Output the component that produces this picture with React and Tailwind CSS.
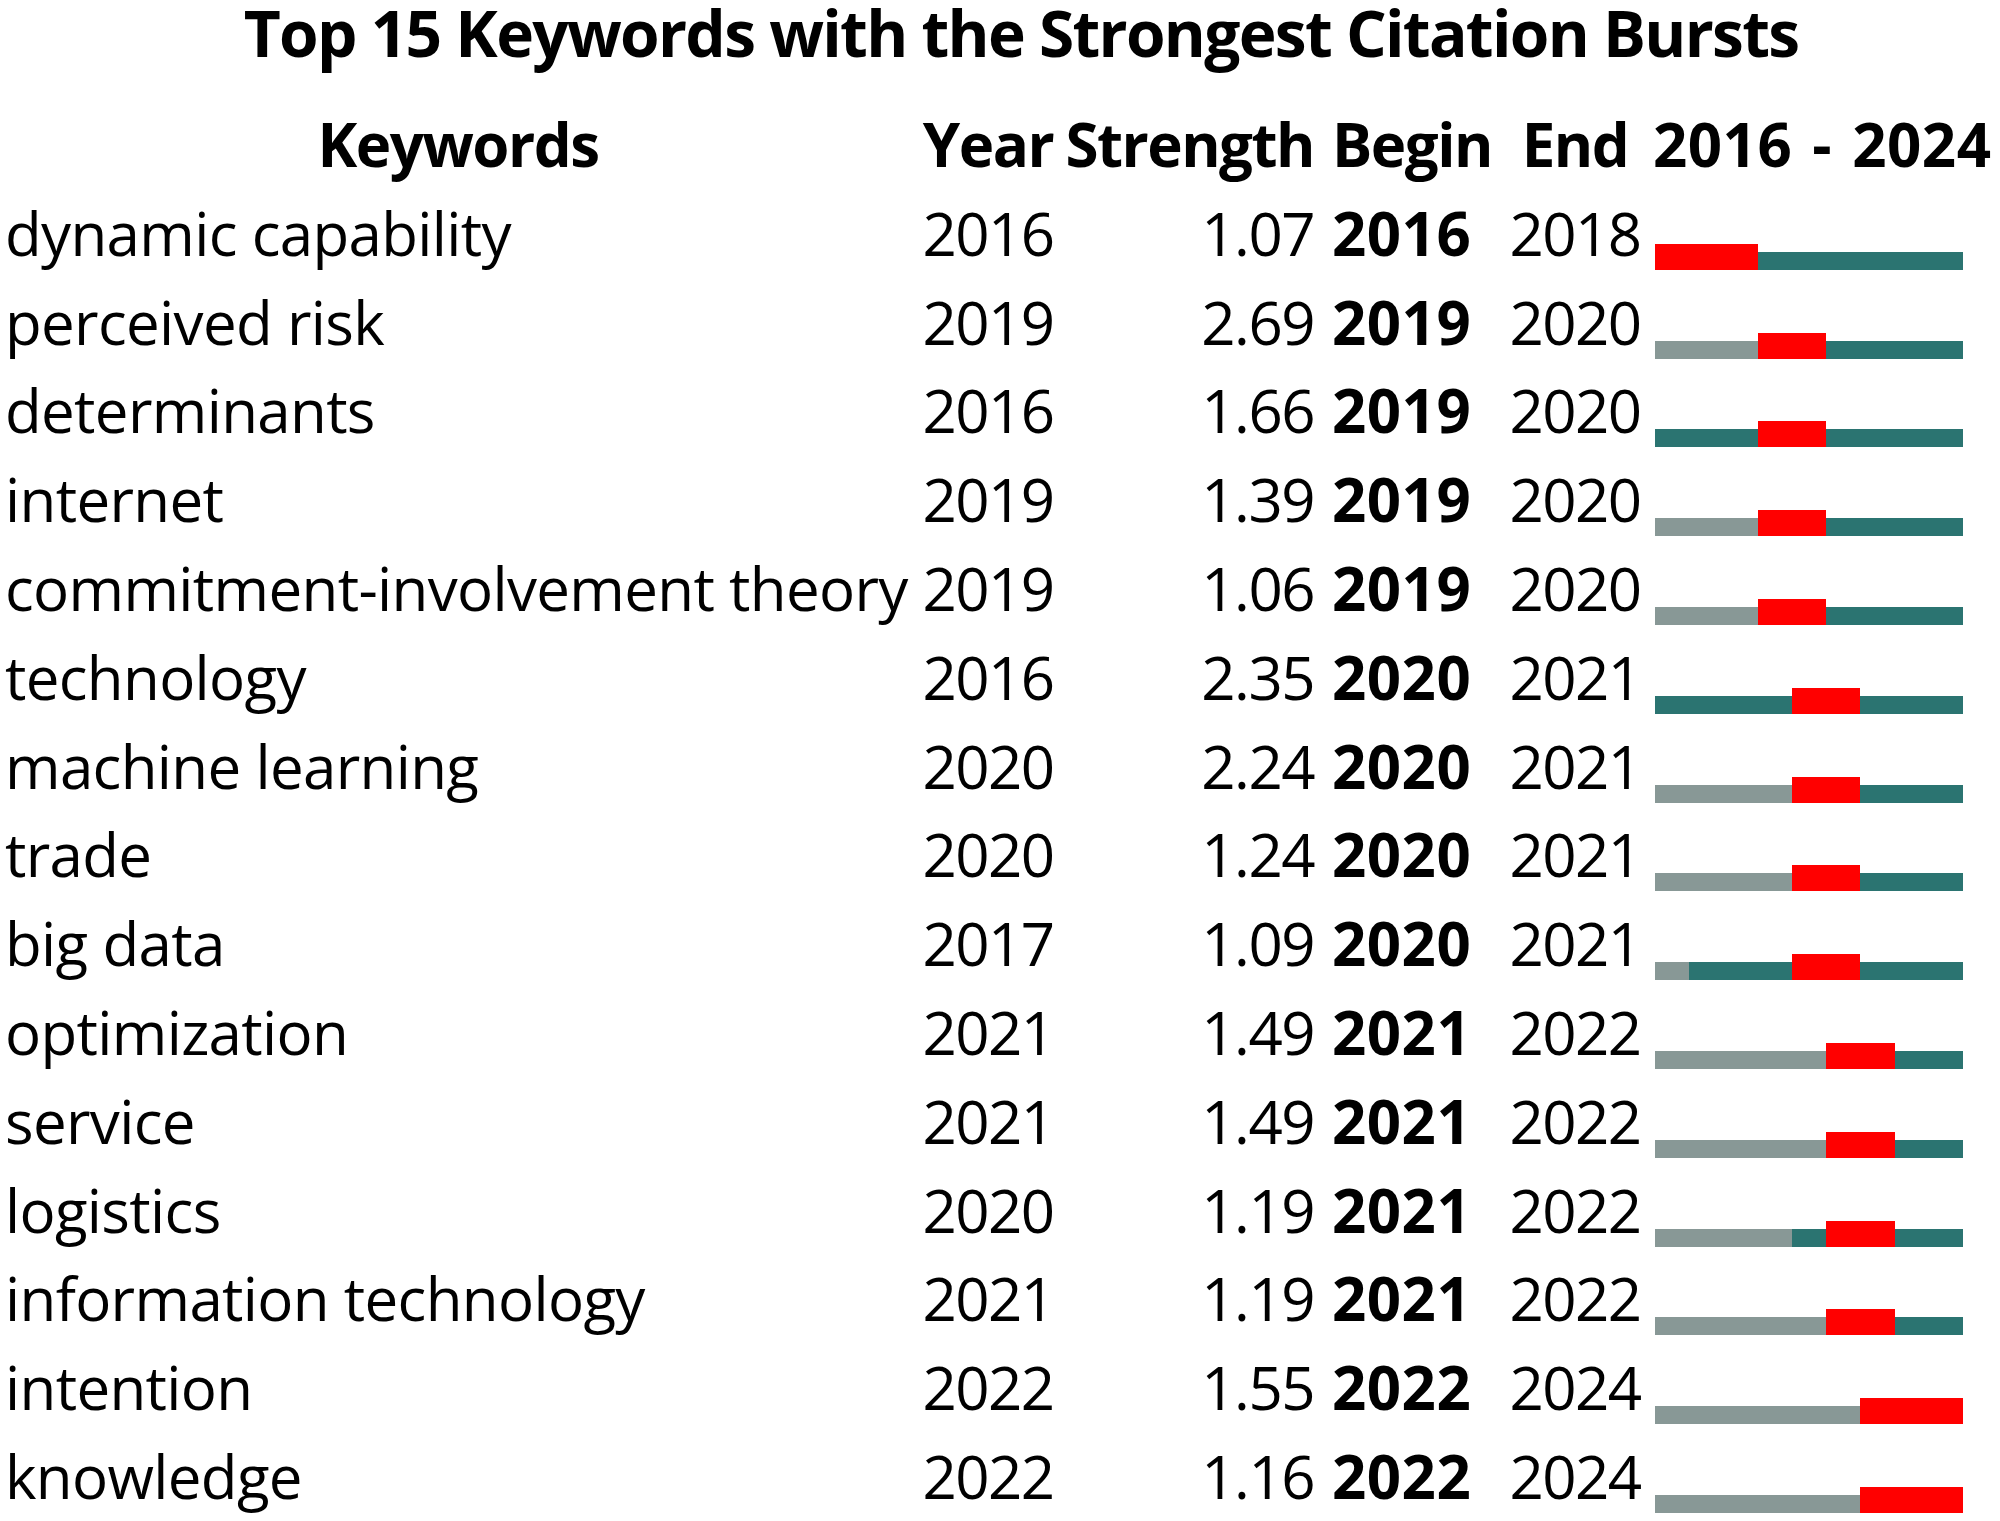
import React from 'react';

const YEARS = [2016, 2017, 2018, 2019, 2020, 2021, 2022, 2023, 2024];

const rows = [
  { keyword: 'dynamic capability', year: 2016, strength: '1.07', begin: 2016, end: 2018 },
  { keyword: 'perceived risk', year: 2019, strength: '2.69', begin: 2019, end: 2020 },
  { keyword: 'determinants', year: 2016, strength: '1.66', begin: 2019, end: 2020 },
  { keyword: 'internet', year: 2019, strength: '1.39', begin: 2019, end: 2020 },
  { keyword: 'commitment-involvement theory', year: 2019, strength: '1.06', begin: 2019, end: 2020 },
  { keyword: 'technology', year: 2016, strength: '2.35', begin: 2020, end: 2021 },
  { keyword: 'machine learning', year: 2020, strength: '2.24', begin: 2020, end: 2021 },
  { keyword: 'trade', year: 2020, strength: '1.24', begin: 2020, end: 2021 },
  { keyword: 'big data', year: 2017, strength: '1.09', begin: 2020, end: 2021 },
  { keyword: 'optimization', year: 2021, strength: '1.49', begin: 2021, end: 2022 },
  { keyword: 'service', year: 2021, strength: '1.49', begin: 2021, end: 2022 },
  { keyword: 'logistics', year: 2020, strength: '1.19', begin: 2021, end: 2022 },
  { keyword: 'information technology', year: 2021, strength: '1.19', begin: 2021, end: 2022 },
  { keyword: 'intention', year: 2022, strength: '1.55', begin: 2022, end: 2024 },
  { keyword: 'knowledge', year: 2022, strength: '1.16', begin: 2022, end: 2024 },
];

// colour of one year cell in the burst strip
const cellClass = (row, y) => {
  if (y >= row.begin && y <= row.end) return 'h-[26px] bg-[#ff0000]';
  if (y < row.year) return 'h-[18px] bg-[#889896]';
  return 'h-[18px] bg-[#2b7471]';
};

const GRID = 'grid grid-cols-[916px_144px_260px_180px_150px_350px] h-[88.8px] leading-[88.8px] whitespace-nowrap';

const BurstStrip = ({ row }) => (
  <div className="pl-[5px] pt-[55px]">
    <div className="flex items-end w-[308px] h-[26px]">
      {YEARS.map(y => (
        <div key={y} className={`flex-1 ${cellClass(row, y)}`} />
      ))}
    </div>
  </div>
);

const App = () => {
  return (
    <div className="w-[2000px] h-[1521px] overflow-hidden bg-white text-black font-['Open_Sans',sans-serif] tracking-[-1.5px]">
      <div className="h-[100px] pt-[1px] pl-[42px] text-center text-[64px] leading-[64px] font-bold tracking-[-1.7px]">
        Top 15 Keywords with the Strongest Citation Bursts
      </div>

      <div className="text-[60px]">
        <div className={`${GRID} font-bold`}>
          <div className="text-center">Keywords</div>
          <div className="text-center">Year</div>
          <div className="text-right pr-[6px]">Strength</div>
          <div className="pl-[12px]">Begin</div>
          <div className="text-center">End</div>
          <div className="pl-[3px] tracking-[0.5px] [word-spacing:4px]">2016 - 2024</div>
        </div>

        {rows.map(row => (
          <div key={row.keyword} className={GRID}>
            <div className="pl-[5px] tracking-[-0.65px]">{row.keyword}</div>
            <div className="text-center">{row.year}</div>
            <div className="text-right pr-[6px]">{row.strength}</div>
            <div className="pl-[12px] font-bold tracking-[0.5px]">{row.begin}</div>
            <div className="text-center">{row.end}</div>
            <BurstStrip row={row} />
          </div>
        ))}
      </div>
    </div>
  );
};

export default App;
